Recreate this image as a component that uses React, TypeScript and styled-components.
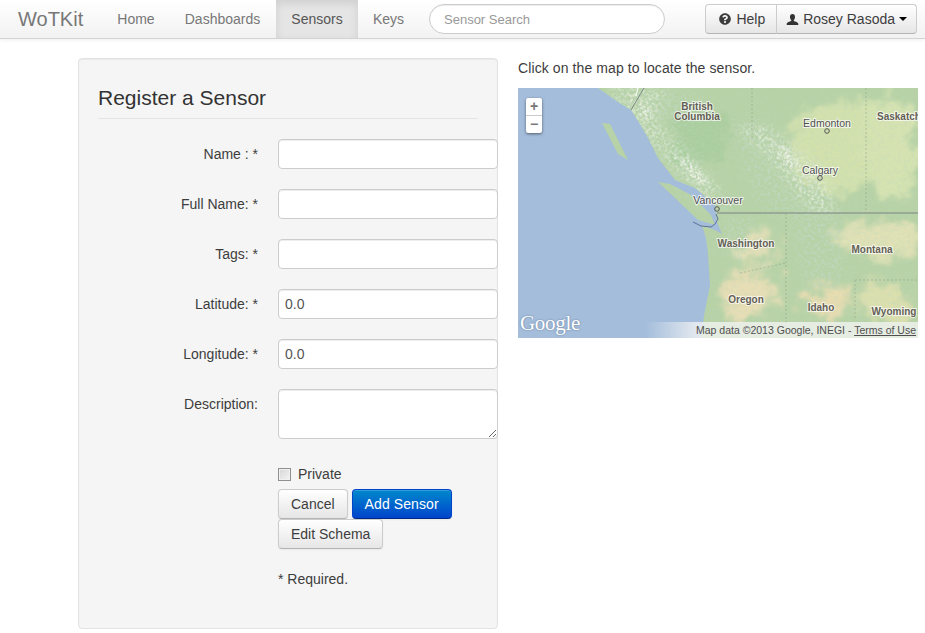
import styled, { createGlobalStyle } from "styled-components";
import { FaQuestionCircle } from "react-icons/fa";

const GlobalStyle = createGlobalStyle`
  html, body {
    margin: 0;
    background: #fff;
    font-family: "Liberation Sans", Arial, sans-serif;
    font-size: 14px;
    line-height: 20px;
    color: #3d3d3d;
  }
`;

const fields = [
  { label: "Name : *", value: "" },
  { label: "Full Name: *", value: "" },
  { label: "Tags: *", value: "" },
  { label: "Latitude: *", value: "0.0" },
  { label: "Longitude: *", value: "0.0" },
];

const placeLabels = [
  { text: "British", x: 179, y: 22, bold: true },
  { text: "Columbia", x: 179, y: 32, bold: true },
  { text: "Edmonton", x: 309, y: 39 },
  { text: "Saskatch", x: 359, y: 32, bold: true, start: true },
  { text: "Calgary", x: 302, y: 86 },
  { text: "Vancouver", x: 200, y: 116 },
  { text: "Washington", x: 228, y: 159, bold: true },
  { text: "Montana", x: 354, y: 165, bold: true },
  { text: "Oregon", x: 228, y: 215, bold: true },
  { text: "Idaho", x: 303, y: 223, bold: true },
  { text: "Wyoming", x: 376, y: 227, bold: true },
];

function MapArt() {
  return (
    <MapSvg viewBox="0 0 400 250">
      <defs>
        <filter id="soft" x="-30%" y="-30%" width="160%" height="160%">
          <feGaussianBlur in="SourceGraphic" stdDeviation="4" result="blurred" />
          <feTurbulence type="fractalNoise" baseFrequency="0.05" numOctaves="3" seed="11" result="warp" />
          <feDisplacementMap in="blurred" in2="warp" scale="34" xChannelSelector="R" yChannelSelector="G" />
        </filter>
        <filter id="ridges" x="0" y="0" width="100%" height="100%">
          <feGaussianBlur in="SourceGraphic" stdDeviation="6" result="area" />
          <feTurbulence type="fractalNoise" baseFrequency="0.3 0.36" numOctaves="3" seed="7" />
          <feColorMatrix
            type="matrix"
            values="0 0 0 0 0.52  0 0 0 0 0.68  0 0 0 0 0.52  2.2 0 0 0 -0.9"
          />
          <feComposite in2="area" operator="in" />
        </filter>
        <filter id="relief" x="0" y="0" width="100%" height="100%">
          <feGaussianBlur in="SourceGraphic" stdDeviation="6" result="area" />
          <feTurbulence type="fractalNoise" baseFrequency="0.32" numOctaves="3" seed="21" />
          <feColorMatrix
            type="matrix"
            values="0 0 0 0 0.84  0 0 0 0 0.89  0 0 0 0 0.78  2.2 0 0 0 -0.95"
          />
          <feComposite in2="area" operator="in" />
        </filter>
        <filter id="snow" x="0" y="0" width="100%" height="100%">
          <feGaussianBlur in="SourceGraphic" stdDeviation="2" result="area" />
          <feTurbulence type="fractalNoise" baseFrequency="0.4" numOctaves="2" seed="3" />
          <feColorMatrix
            type="matrix"
            values="0 0 0 0 0.92  0 0 0 0 0.92  0 0 0 0 0.88  2.6 0 0 0 -1"
          />
          <feComposite in2="area" operator="in" />
        </filter>
        <clipPath id="land">
          <path d="M80 0 L100 14 L113 22 L122 36 L130 50 L140 70 L157 92 L177 100 L197 117 L199 134 L204 146 L197 142 L184 137 L188 150 L190 166 L192 197 L186 228 L183 250 L400 250 L400 0 Z" />
          <path d="M140 94 L152 96 L173 107 L193 127 L197 137 L180 132 L157 110 Z" />
          <path d="M84 35 L92 36 L110 72 L100 66 Z" />
        </clipPath>
      </defs>
      <rect width="400" height="250" fill="#a4bddb" />
      <g clipPath="url(#land)">
        <rect width="400" height="250" fill="#b7d2a6" />
        <g filter="url(#soft)">
          <ellipse cx="322" cy="58" rx="52" ry="46" fill="#d3e1ad" />
          <ellipse cx="372" cy="60" rx="28" ry="52" fill="#d6e3b1" />
          <ellipse cx="362" cy="150" rx="42" ry="18" fill="#e0e1b5" />
          <ellipse cx="240" cy="160" rx="18" ry="16" fill="#e2dfb6" />
          <ellipse cx="232" cy="205" rx="28" ry="24" fill="#e8deb5" />
          <ellipse cx="308" cy="214" rx="26" ry="16" fill="#e8dcb0" />
          <ellipse cx="368" cy="214" rx="26" ry="20" fill="#dcdfae" />
          <ellipse cx="182" cy="52" rx="32" ry="26" fill="#abce9f" />
        </g>
        <rect width="400" height="250" fill="#fff" filter="url(#ridges)" opacity="0.35" />
        <path
          d="M88 0 L165 0 L190 20 L150 40 L205 105 L215 125 L190 125 L150 85 L115 35 Z"
          fill="#fff"
          filter="url(#ridges)"
        />
        <path
          d="M212 30 L240 30 L300 80 L325 130 L325 195 L290 205 L270 130 L235 110 Z"
          fill="#fff"
          filter="url(#ridges)"
        />
        <path d="M205 128 L238 128 L225 175 L205 160 Z" fill="#fff" filter="url(#ridges)" />
        <path
          d="M88 0 L150 0 L135 30 L205 105 L185 112 L120 40 Z"
          fill="#fff"
          filter="url(#relief)"
        />
        <path
          d="M218 35 L245 35 L300 80 L320 125 L295 125 L250 70 Z"
          fill="#fff"
          filter="url(#relief)"
        />
        <path
          d="M122 16 L132 18 L134 32 L126 32 Z M160 70 L172 72 L192 94 L180 98 Z M258 58 L268 58 L282 78 L270 78 Z"
          fill="#fff"
          filter="url(#snow)"
        />
      </g>
      <path d="M126 0 L113 22" stroke="#6a7378" strokeWidth="0.8" fill="none" />
      <path d="M120 0 L118 8" stroke="#fff" strokeWidth="1" fill="none" />
      <path d="M199 125 L400 125" stroke="#7a8286" strokeWidth="1" fill="none" />
      <path
        d="M198 126 L200 131 L197 136 L193 139 L183 138 L175 134"
        stroke="#5d7396"
        strokeWidth="1"
        fill="none"
      />
      <g stroke="#94a48e" strokeWidth="0.6" strokeDasharray="2 2" fill="none">
        <path d="M234 0 L234 50" />
        <path d="M348 0 L348 125" />
        <path d="M268 125 L268 250" />
        <path d="M337 192 L337 232" />
        <path d="M337 192 L400 192" />
        <path d="M222 185 L268 175" />
      </g>
      {placeLabels.map((p) => (
        <MapLabel
          key={p.text}
          x={p.x}
          y={p.y}
          $bold={p.bold}
          textAnchor={p.start ? "start" : "middle"}
        >
          {p.text}
        </MapLabel>
      ))}
      <g fill="none" stroke="#555" strokeWidth="1">
        <circle cx="309" cy="43" r="2.3" />
        <circle cx="302" cy="90" r="2.3" />
        <circle cx="199" cy="121" r="2.3" />
      </g>
    </MapSvg>
  );
}

function UserIcon() {
  return (
    <svg width="13" height="13" viewBox="0 0 14 14" fill="#333">
      <path d="M7 1C5.2 1 4.3 2.4 4.3 4.2c0 1.4.6 2.6 1.3 3.3v1.1C3.600 9.400 1.200 10 .8 11.200V13h12.400v-1.800c-.4-1.200-2.800-1.800-4.800-2.600V7.500c.7-.7 1.300-1.900 1.300-3.300C9.700 2.400 8.800 1 7 1z" />
    </svg>
  );
}

export default function App() {
  return (
    <>
      <GlobalStyle />
      <Navbar>
        <Brand>WoTKit</Brand>
        <NavItem $width={66}>Home</NavItem>
        <NavItem $width={107}>Dashboards</NavItem>
        <NavItem $width={82} $active>
          Sensors
        </NavItem>
        <NavItem $width={61}>Keys</NavItem>
        <Search placeholder="Sensor Search" />
        <ButtonGroup>
          <HelpButton>
            <FaQuestionCircle size={12} />
            Help
          </HelpButton>
          <UserButton>
            <UserIcon />
            Rosey Rasoda
            <Caret />
          </UserButton>
        </ButtonGroup>
      </Navbar>
      <Page>
        <Well>
          <Legend>Register a Sensor</Legend>
          {fields.map((f) => (
            <FormRow key={f.label}>
              <FieldLabel>{f.label}</FieldLabel>
              <TextInput defaultValue={f.value} />
            </FormRow>
          ))}
          <FormRow>
            <FieldLabel>Description:</FieldLabel>
            <TextArea />
          </FormRow>
          <Controls>
            <CheckRow>
              <Check type="checkbox" />
              Private
            </CheckRow>
            <Buttons>
              <Button>Cancel</Button>
              <Button $primary>Add Sensor</Button>
              <Button>Edit Schema</Button>
            </Buttons>
            <Note>* Required.</Note>
          </Controls>
        </Well>
        <MapColumn>
          <Hint>Click on the map to locate the sensor.</Hint>
          <MapBox>
            <MapArt />
            <ZoomControl>
              <ZoomButton>+</ZoomButton>
              <ZoomButton>−</ZoomButton>
            </ZoomControl>
            <GoogleMark>Google</GoogleMark>
            <Attribution>
              Map data ©2013 Google, INEGI - <u>Terms of Use</u>
            </Attribution>
          </MapBox>
        </MapColumn>
      </Page>
    </>
  );
}

const Navbar = styled.div`
  display: flex;
  align-items: center;
  height: 38px;
  padding: 0 8px 0 18px;
  background: linear-gradient(#ffffff, #f2f2f2);
  border-bottom: 1px solid #d4d4d4;
  box-shadow: 0 1px 4px rgba(0, 0, 0, 0.07);
`;

const Brand = styled.div`
  width: 65px;
  font-size: 20px;
  color: #777;
  margin-right: 20px;
`;

const NavItem = styled.div<{ $active?: boolean; $width: number }>`
  display: flex;
  align-items: center;
  justify-content: center;
  width: ${(p) => p.$width}px;
  height: 100%;
  color: ${(p) => (p.$active ? "#555" : "#777")};
  background: ${(p) => (p.$active ? "#e5e5e5" : "transparent")};
  box-shadow: ${(p) => (p.$active ? "inset 0 3px 8px rgba(0, 0, 0, 0.1)" : "none")};
`;

const Search = styled.input`
  box-sizing: border-box;
  width: 236px;
  height: 30px;
  margin-left: 10px;
  padding: 0 14px;
  background: #fff;
  border: 1px solid #ccc;
  border-radius: 15px;
  font-family: inherit;
  font-size: 13px;
  box-shadow: inset 0 1px 1px rgba(0, 0, 0, 0.075);
  &::placeholder {
    color: #999;
    opacity: 1;
  }
`;

const ButtonGroup = styled.div`
  display: flex;
  margin-left: auto;
`;

const GroupButton = styled.div`
  display: flex;
  align-items: center;
  box-sizing: border-box;
  height: 30px;
  color: #3d3d3d;
  background: linear-gradient(#ffffff, #e6e6e6);
  border: 1px solid #ccc;
  border-bottom-color: #b3b3b3;
`;

const HelpButton = styled(GroupButton)`
  gap: 5px;
  padding: 0 11px 0 13px;
  border-radius: 4px 0 0 4px;
`;

const UserButton = styled(GroupButton)`
  gap: 4px;
  margin-left: -1px;
  padding: 0 9px;
  border-radius: 0 4px 4px 0;
`;

const Caret = styled.span`
  width: 0;
  height: 0;
  border-top: 4px solid #000;
  border-left: 4px solid transparent;
  border-right: 4px solid transparent;
`;

const Page = styled.div`
  display: flex;
  gap: 20px;
  padding: 19px 0 0 78px;
`;

const Well = styled.div`
  box-sizing: border-box;
  flex: none;
  width: 420px;
  height: 571px;
  padding: 19px;
  background: #f5f5f5;
  border: 1px solid #e3e3e3;
  border-radius: 4px;
  box-shadow: inset 0 1px 1px rgba(0, 0, 0, 0.05);
`;

const Legend = styled.div`
  width: 380px;
  margin-bottom: 20px;
  font-size: 21px;
  line-height: 40px;
  color: #333;
  border-bottom: 1px solid #e5e5e5;
`;

const FormRow = styled.div`
  display: flex;
  gap: 20px;
  margin-bottom: 20px;
`;

const FieldLabel = styled.label`
  flex: none;
  width: 160px;
  padding-top: 5px;
  text-align: right;
`;

const TextInput = styled.input`
  box-sizing: border-box;
  flex: none;
  width: 220px;
  height: 30px;
  padding: 4px 6px;
  color: #555;
  background: #fff;
  border: 1px solid #ccc;
  border-radius: 4px;
  font-family: inherit;
  font-size: 14px;
  box-shadow: inset 0 1px 1px rgba(0, 0, 0, 0.075);
`;

const TextArea = styled.textarea`
  box-sizing: border-box;
  display: block;
  flex: none;
  width: 220px;
  height: 50px;
  padding: 4px 6px;
  background: #fff;
  border: 1px solid #ccc;
  border-radius: 4px;
  font-family: inherit;
  font-size: 14px;
  box-shadow: inset 0 1px 1px rgba(0, 0, 0, 0.075);
`;

const Controls = styled.div`
  margin-left: 180px;
`;

const CheckRow = styled.label`
  display: flex;
  align-items: center;
  gap: 7px;
  height: 20px;
  padding: 5px 0;
`;

const Check = styled.input`
  appearance: none;
  box-sizing: border-box;
  width: 13px;
  height: 13px;
  margin: 0;
  border: 1px solid #8e8f8f;
  background: linear-gradient(135deg, #d6d6d6, #f4f4f4);
  box-shadow: inset 0 0 0 1px #f1f1f1;
`;

const Buttons = styled.div`
  display: flex;
  flex-wrap: wrap;
  column-gap: 4px;
`;

const Button = styled.button<{ $primary?: boolean }>`
  box-sizing: border-box;
  height: 30px;
  padding: 0 12px;
  font-family: inherit;
  font-size: 14px;
  letter-spacing: ${(p) => (p.$primary ? "0.1px" : "0")};
  color: ${(p) => (p.$primary ? "#fff" : "#3d3d3d")};
  background: ${(p) =>
    p.$primary ? "linear-gradient(#0088cc, #0044cc)" : "linear-gradient(#ffffff, #e6e6e6)"};
  border: 1px solid ${(p) => (p.$primary ? "#0044cc" : "#ccc")};
  border-bottom-color: ${(p) => (p.$primary ? "#002a80" : "#b3b3b3")};
  border-radius: 4px;
  box-shadow: inset 0 1px 0 rgba(255, 255, 255, 0.2), 0 1px 2px rgba(0, 0, 0, 0.05);
`;

const Note = styled.p`
  margin: 20px 0 0;
`;

const MapColumn = styled.div`
  flex: none;
  width: 400px;
`;

const Hint = styled.p`
  margin: 0;
  height: 30px;
  line-height: 20px;
  letter-spacing: 0.1px;
`;

const MapBox = styled.div`
  position: relative;
  width: 400px;
  height: 250px;
  overflow: hidden;
`;

const MapSvg = styled.svg`
  display: block;
  width: 400px;
  height: 250px;
`;

const MapLabel = styled.text<{ $bold?: boolean }>`
  font-family: "Liberation Sans", Arial, sans-serif;
  font-size: ${(p) => (p.$bold ? "10px" : "10.5px")};
  font-weight: ${(p) => (p.$bold ? "bold" : "normal")};
  fill: ${(p) => (p.$bold ? "#645f55" : "#505050")};
  stroke: rgba(255, 255, 255, 0.7);
  stroke-width: 2px;
  paint-order: stroke;
`;

const ZoomControl = styled.div`
  position: absolute;
  left: 8px;
  top: 10px;
  width: 16px;
  background: #fff;
  border-radius: 2px;
  box-shadow: 0 1px 3px rgba(0, 0, 0, 0.5);
`;

const ZoomButton = styled.div`
  height: 17px;
  font-size: 14px;
  font-weight: bold;
  line-height: 16px;
  text-align: center;
  color: #777;
  & + & {
    border-top: 1px solid #ccc;
  }
`;

const GoogleMark = styled.div`
  position: absolute;
  left: 2px;
  bottom: 2px;
  font-family: "Liberation Serif", serif;
  font-size: 21px;
  line-height: 26px;
  letter-spacing: -0.3px;
  color: #fff;
  text-shadow: 0 0 2px rgba(70, 90, 120, 0.7);
`;

const Attribution = styled.div`
  position: absolute;
  right: 0;
  bottom: 0;
  width: 273px;
  height: 16px;
  padding-right: 2px;
  box-sizing: border-box;
  font-size: 10.5px;
  line-height: 16px;
  text-align: right;
  color: #505050;
  background: linear-gradient(to right, rgba(245, 245, 245, 0) 0, rgba(245, 245, 245, 0.75) 50px);
`;
